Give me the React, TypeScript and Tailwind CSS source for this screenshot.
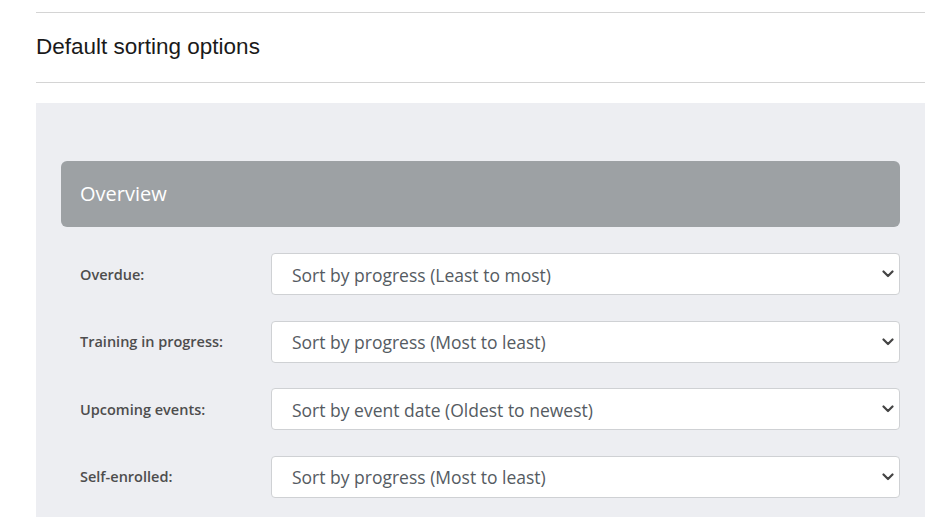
import React from "react";

const rows = [
  { label: "Overdue:", value: "Sort by progress (Least to most)" },
  { label: "Training in progress:", value: "Sort by progress (Most to least)" },
  { label: "Upcoming events:", value: "Sort by event date (Oldest to newest)" },
  { label: "Self-enrolled:", value: "Sort by progress (Most to least)" },
];

function Chevron() {
  return (
    <svg width="12" height="8" viewBox="0 0 12 8" className="absolute right-[6px] top-1/2 -translate-y-1/2 pointer-events-none">
      <path d="M1.5 1.5 L6 6 L10.5 1.5" fill="none" stroke="#444" strokeWidth="2.2" strokeLinecap="round" strokeLinejoin="round" />
    </svg>
  );
}

export default function App() {
  return (
    <div className="w-[933px] h-[517px] overflow-hidden bg-white pl-[36px] pr-[8px] pt-[12px]" style={{ fontFamily: '"Open Sans", sans-serif' }}>
      <div className="border-t border-[#d4d4d4]" />
      <h2 className="h-[69px] flex items-center text-[22.5px] text-[#1a1a1a] font-['Liberation_Sans',Arial,sans-serif] leading-none pb-[1px]">
        Default sorting options
      </h2>
      <div className="border-t border-[#d4d4d4]" />
      <div className="mt-[20px] bg-[#edeef2] pl-[25px] pr-[25px] pt-[58px] pb-[20px]">
        <div className="h-[66px] rounded-[6px] bg-[#9da1a4] flex items-center pl-[19px] text-white text-[20px]">
          Overview
        </div>
        <div className="flex flex-col gap-[25.5px] mt-[26px]">
          {rows.map((r) => (
            <div key={r.label} className="flex items-center h-[42px]">
              <div className="w-[210px] pl-[19px] pt-[1px] text-[14.5px] font-semibold text-[#4d4d4d]">{r.label}</div>
              <div className="relative flex-1">
                <div className="h-[42px] flex items-center bg-white border border-[#cfd1d4] rounded-[4px] pl-[20px] pt-[2px] text-[17.5px] text-[#555b62]">
                  {r.value}
                </div>
                <Chevron />
              </div>
            </div>
          ))}
        </div>
      </div>
    </div>
  );
}
